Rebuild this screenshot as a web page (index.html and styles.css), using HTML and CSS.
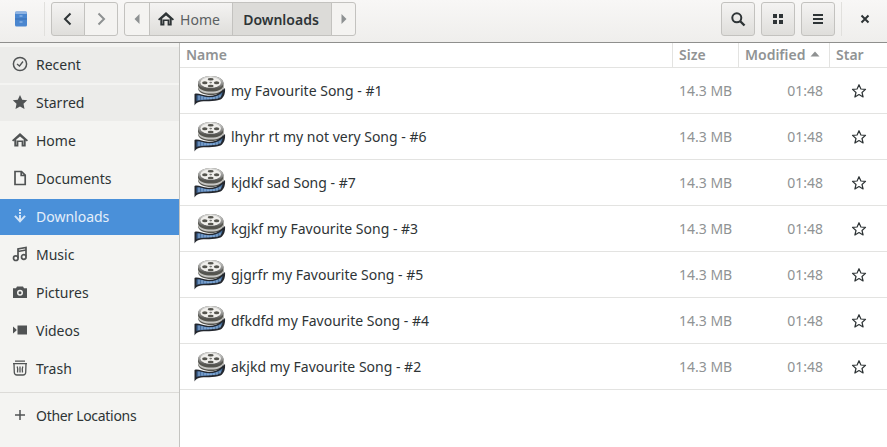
FILE: index.html
```html
<!DOCTYPE html>
<html lang="en">
<head>
<meta charset="utf-8">
<title>Downloads</title>
<link rel="stylesheet" href="styles.css">
</head>
<body>
<svg class="defs" width="0" height="0" aria-hidden="true">
  <defs>
    <linearGradient id="reelG" x1="0" y1="0" x2="0" y2="1">
      <stop offset="0" stop-color="#e2e2e0"/><stop offset="0.5" stop-color="#9a9a98"/><stop offset="1" stop-color="#4a4a48"/>
    </linearGradient>
    <linearGradient id="stripG" x1="0" y1="0" x2="1" y2="0">
      <stop offset="0" stop-color="#3a5f8e"/><stop offset="0.5" stop-color="#6b9ad0"/><stop offset="1" stop-color="#3f6690"/>
    </linearGradient>
    <symbol id="reel" viewBox="0 0 32 32">
      <path d="M4 8.500 C4 4 10 1 17 1 C24 1 29.500 4 29.500 8.500 L29.500 13 C29.500 17.500 24 20 17 20 C10 20 4 17.500 4 13 Z" fill="#55554f"/>
      <path d="M4 10.500 C5 14.500 10 16.500 17 16.500 C24 16.500 28.500 14.500 29.500 10.500 L29.500 12.500 C28.500 16.500 24 18.500 17 18.500 C10 18.500 5 16.500 4 12.500 Z" fill="#c6c6c3"/>
      <ellipse cx="16.700" cy="7.800" rx="12.700" ry="6.800" fill="url(#reelG)"/>
      <ellipse cx="16.700" cy="7.500" rx="10.300" ry="5.300" fill="#f0efec"/>
      <ellipse cx="10.800" cy="7.800" rx="2.700" ry="1.500" fill="#55554f"/>
      <ellipse cx="22.600" cy="7.800" rx="2.700" ry="1.500" fill="#55554f"/>
      <ellipse cx="16.700" cy="4.300" rx="3" ry="1.300" fill="#55554f"/>
      <ellipse cx="16.700" cy="11" rx="3" ry="1.200" fill="#55554f"/>
      <ellipse cx="16.700" cy="7.600" rx="1.400" ry="0.800" fill="#777774"/>
      <path d="M0.500 19 C4 17.500 8 20.500 14 20.800 C20 21 24 19.500 27 16.500 L31 13 C31.500 18 30 22.500 26.500 24.500 C20 27 10 25.500 5 27 C3 27.500 1.500 28.500 0.500 30.500 Z" fill="#23272e"/>
      <path d="M2.500 20.500 C6 19.800 9 22 14 22.300 C20 22.500 24.500 21 28.500 17 C28.500 20 27 22.300 24.500 23.300 C19 25 9 24 2.500 26 Z" fill="url(#stripG)"/>
      <path d="M5 20.500 V25.200 M8 21.200 V24.600 M11 22 V24.300 M14 22.300 V24.300 M17 22.500 V24.300 M20 22 V24.200 M23 21 V23.800 M26 19.800 V22.600" stroke="#a9c9ec" stroke-width="0.800"/>
    </symbol>
    <symbol id="star" viewBox="0 0 16 16">
      <path d="M8 1.700 L9.900 6 L14.500 6.400 L11 9.500 L12.100 14 L8 11.600 L3.900 14 L5 9.500 L1.500 6.400 L6.100 6 Z" fill="none" stroke="#2e3436" stroke-width="1.200" stroke-linejoin="round"/>
    </symbol>
    <symbol id="home" viewBox="0 0 16 16">
      <path d="M8 1 L16 8.300 L14.800 9.500 L13.700 8.500 L13.700 14.500 L9.600 14.500 L9.600 10 L6.400 10 L6.400 14.500 L2.300 14.500 L2.300 8.500 L1.200 9.500 L0 8.300 Z M8 4.400 L4.300 7.600 L4.300 12.800 L4.700 12.800 L4.700 8.400 L11.300 8.400 L11.300 12.800 L11.700 12.800 L11.700 7.600 Z" fill-rule="evenodd"/>
    </symbol>
  </defs>
</svg>

<div class="window">
  <header class="toolbar">
    <div class="tb-left">
      <svg class="app-icon" width="14" height="16" viewBox="0 0 14 16" aria-hidden="true">
        <rect x="1" y="0.500" width="12" height="15" rx="1.500" fill="#4a86cf"/>
        <rect x="1" y="0.500" width="12" height="2.500" rx="1" fill="#8fb4e3"/>
        <path d="M1 8 H13" stroke="#3a6fb0" stroke-width="1"/>
        <path d="M5.500 5 H8.500 M5.500 11 H8.500" stroke="#a8c7ec" stroke-width="1"/>
      </svg>
      <span class="vsep"></span>
      <div class="linked nav">
        <button class="btn nav-btn" aria-label="Back">
          <svg width="16" height="16" viewBox="0 0 16 16"><path d="M10.500 2.500 L5 8 L10.500 13.500" fill="none" stroke="#2e3436" stroke-width="2"/></svg>
        </button>
        <button class="btn nav-btn flat" aria-label="Forward">
          <svg width="16" height="16" viewBox="0 0 16 16"><path d="M5.500 2.500 L11 8 L5.500 13.500" fill="none" stroke="#8e9192" stroke-width="2"/></svg>
        </button>
      </div>
      <div class="linked path">
        <button class="btn arrow flat" aria-label="Scroll left"><svg width="6" height="10" viewBox="0 0 6 10"><path d="M5.500 0 V10 L0.500 5 Z" fill="#8e9192"/></svg></button>
        <button class="btn crumb">
          <svg class="crumb-home" width="16" height="16" aria-hidden="true"><use href="#home"/></svg>
          <span>Home</span>
        </button>
        <button class="btn crumb current"><span>Downloads</span></button>
        <button class="btn arrow flat last" aria-label="Scroll right"><svg width="6" height="10" viewBox="0 0 6 10"><path d="M0.500 0 V10 L5.500 5 Z" fill="#8e9192"/></svg></button>
      </div>
    </div>
    <div class="tb-right">
      <button class="btn tool" aria-label="Search">
        <svg width="16" height="16" viewBox="0 0 16 16"><circle cx="6.800" cy="6.800" r="4.500" fill="none" stroke="#2e3436" stroke-width="2"/><path d="M10 10 L14.500 14.500" stroke="#2e3436" stroke-width="2.400"/></svg>
      </button>
      <button class="btn tool" aria-label="Grid view">
        <svg width="16" height="16" viewBox="0 0 16 16" fill="#2e3436"><rect x="3" y="3" width="4" height="4"/><rect x="9" y="3" width="4" height="4"/><rect x="3" y="9" width="4" height="4"/><rect x="9" y="9" width="4" height="4"/></svg>
      </button>
      <button class="btn tool" aria-label="Menu">
        <svg width="16" height="16" viewBox="0 0 16 16" fill="#2e3436"><rect x="3" y="3" width="10" height="2"/><rect x="3" y="7" width="10" height="2"/><rect x="3" y="11" width="10" height="2"/></svg>
      </button>
      <span class="vsep right"></span>
      <button class="close" aria-label="Close">
        <svg width="16" height="16" viewBox="0 0 16 16"><path d="M4.500 4.500 L11.500 11.500 M11.500 4.500 L4.500 11.500" stroke="#2e3436" stroke-width="2"/></svg>
      </button>
    </div>
  </header>

  <div class="content">
    <nav class="sidebar">
      <div class="places">
        <a class="place tinted">
          <svg width="16" height="16" viewBox="0 0 16 16"><circle cx="8" cy="8" r="6.600" fill="none" stroke-width="1.500" class="sline"/><path d="M5 8 L7.500 10 L11 5.500" fill="none" stroke-width="1.300" class="sline"/></svg>
          <span>Recent</span>
        </a>
        <a class="place tinted">
          <svg width="16" height="16" viewBox="0 0 16 16"><path class="sfill" d="M8 1 L10.200 5.800 L15.200 6.300 L11.500 9.800 L12.500 15 L8 12.400 L3.500 15 L4.500 9.800 L0.800 6.300 L5.800 5.800 Z"/></svg>
          <span>Starred</span>
        </a>
        <a class="place">
          <svg class="sfill" width="16" height="16"><use href="#home"/></svg>
          <span>Home</span>
        </a>
        <a class="place">
          <svg width="16" height="16" viewBox="0 0 16 16"><path class="sline" d="M3 1.500 H9.500 L13.200 5.200 V14.500 H3 Z M9.200 1.500 V5.500 H13.200" fill="none" stroke-width="1.700"/></svg>
          <span>Documents</span>
        </a>
        <a class="place active">
          <svg width="16" height="16" viewBox="0 0 16 16" fill="#d3e4f7"><rect x="7" y="1" width="2" height="2"/><rect x="7" y="4" width="2" height="2"/><rect x="7" y="7" width="2" height="5"/><path d="M2.200 8.500 L8 14.800 L13.800 8.500 L12.300 7.300 L8 12 L3.700 7.300 Z"/></svg>
          <span>Downloads</span>
        </a>
        <a class="place">
          <svg width="16" height="16" viewBox="0 0 16 16"><path class="sline" d="M6 12 V3 L14 1.500 V10.500 M6 5.500 L14 4" fill="none" stroke-width="1.700"/><circle class="sline" cx="3.800" cy="12.200" r="2.300" fill="none" stroke-width="1.700"/><circle class="sline" cx="11.800" cy="11" r="2.300" fill="none" stroke-width="1.700"/></svg>
          <span>Music</span>
        </a>
        <a class="place">
          <svg width="16" height="16" viewBox="0 0 16 16"><path class="sfill" fill-rule="evenodd" d="M5 2.500 H11 L12 4.200 H15 V14 H1 V4.200 H4 Z M8 5.800 A3 3 0 1 0 8 11.800 A3 3 0 1 0 8 5.800 Z M8 7.300 A1.500 1.500 0 1 1 8 10.300 A1.500 1.500 0 1 1 8 7.300 Z"/></svg>
          <span>Pictures</span>
        </a>
        <a class="place">
          <svg width="16" height="16" viewBox="0 0 16 16"><path class="sfill" d="M5.500 3.500 H15 V12.500 H5.500 Z M1 4.500 L4.500 7.500 V8.500 L1 11.500 Z"/></svg>
          <span>Videos</span>
        </a>
        <a class="place">
          <svg width="16" height="16" viewBox="0 0 16 16"><path class="sline" d="M1 3.700 H15 M3 1.200 H13 M2 3.700 L2.300 12.500 C2.400 14 3.400 15 5 15 H11 C12.600 15 13.600 14 13.700 12.500 L14 3.700 M5.200 6.500 C6 8.500 6 10 5.500 12.500 M8 6.500 V12.500 M10.800 6.500 C10 8.500 10 10 10.500 12.500" fill="none" stroke-width="1.300"/></svg>
          <span>Trash</span>
        </a>
      </div>
      <hr class="side-sep">
      <a class="place other">
        <svg width="16" height="16" viewBox="0 0 16 16"><path class="sline" d="M8 3 V13 M3 8 H13" fill="none" stroke-width="1.500"/></svg>
        <span>Other Locations</span>
      </a>
    </nav>

    <main class="files">
      <div class="thead">
        <div class="th first">Name</div>
        <div class="th">Size</div>
        <div class="th sorted">Modified <svg width="10" height="6" viewBox="0 0 10 6" aria-hidden="true"><path d="M0.500 5.500 L5 0.500 L9.500 5.500 Z" fill="#8f9192"/></svg></div>
        <div class="th">Star</div>
      </div>
      <div class="row"><div class="name"><svg class="reel"><use href="#reel"/></svg><span>my Favourite Song - #1</span></div><div class="size">14.3 MB</div><div class="time">01:48</div><div class="fav"><svg width="16" height="16"><use href="#star"/></svg></div></div>
      <div class="row"><div class="name"><svg class="reel"><use href="#reel"/></svg><span>lhyhr rt my not very Song - #6</span></div><div class="size">14.3 MB</div><div class="time">01:48</div><div class="fav"><svg width="16" height="16"><use href="#star"/></svg></div></div>
      <div class="row"><div class="name"><svg class="reel"><use href="#reel"/></svg><span>kjdkf sad Song - #7</span></div><div class="size">14.3 MB</div><div class="time">01:48</div><div class="fav"><svg width="16" height="16"><use href="#star"/></svg></div></div>
      <div class="row"><div class="name"><svg class="reel"><use href="#reel"/></svg><span>kgjkf my Favourite Song - #3</span></div><div class="size">14.3 MB</div><div class="time">01:48</div><div class="fav"><svg width="16" height="16"><use href="#star"/></svg></div></div>
      <div class="row"><div class="name"><svg class="reel"><use href="#reel"/></svg><span>gjgrfr my Favourite Song - #5</span></div><div class="size">14.3 MB</div><div class="time">01:48</div><div class="fav"><svg width="16" height="16"><use href="#star"/></svg></div></div>
      <div class="row"><div class="name"><svg class="reel"><use href="#reel"/></svg><span>dfkdfd my Favourite Song - #4</span></div><div class="size">14.3 MB</div><div class="time">01:48</div><div class="fav"><svg width="16" height="16"><use href="#star"/></svg></div></div>
      <div class="row"><div class="name"><svg class="reel"><use href="#reel"/></svg><span>akjkd my Favourite Song - #2</span></div><div class="size">14.3 MB</div><div class="time">01:48</div><div class="fav"><svg width="16" height="16"><use href="#star"/></svg></div></div>
    </main>
  </div>
</div>
</body>
</html>
```

FILE: styles.css
```css
* { box-sizing: border-box; }
html, body { margin: 0; height: 100%; overflow: hidden; }
body { font: 14px "Noto Sans", "Open Sans", sans-serif; color: #2e3436; background: #fff; }
.defs { display: block; width: 0; height: 0; }
.window { width: 887px; height: 447px; display: flex; flex-direction: column; }

/* toolbar */
.toolbar {
  height: 43px; flex: none; display: flex; justify-content: space-between;
  padding-top: 2px; padding-left: 14px;
  background: linear-gradient(#f8f7f6, #efeeec);
  border-bottom: 1px solid #8f8f8d;
}
.tb-left, .tb-right { display: flex; align-items: flex-start; }
.app-icon { margin-top: 9px; }
.vsep { width: 1px; height: 34px; background: #e1e0dd; margin: 0 6px 0 16px; }
.vsep.right { margin: 0 0 0 6px; }
.linked { display: flex; height: 34px; }
.btn {
  display: flex; align-items: center; justify-content: center; height: 34px; padding: 0; margin: 0;
  font: inherit; color: #2e3436;
  border: 1px solid #c3c2bf; border-radius: 3px;
  background: linear-gradient(#f4f3f2, #dfdedb);
}
.linked .btn { border-radius: 0; margin-left: -1px; }
.linked .btn:first-child { border-radius: 3px 0 0 3px; margin-left: 0; }
.linked .btn:last-child { border-radius: 0 3px 3px 0; }
.btn.flat { background: #f4f3f1; }
.nav-btn { width: 34px; }
.linked.nav { margin-right: 6px; width: 67px; }
.path { width: 232px; }
.arrow { width: 26px; flex: none; }
.arrow.last { width: 25px; }
.crumb { flex: none; color: #5b6062; }
.crumb:nth-child(2) { width: 84px; padding-right: 4px; gap: 6px; }
.crumb.current { width: 100px; padding-right: 2px; background: #dcdbd8; color: #2e3436; font-weight: 600; }
.crumb-home { fill: #2e3436; }
.tb-right .tool { width: 34px; margin-right: 6px; }
.tb-right .tool:nth-of-type(3) { margin-right: 0; }
.close { width: 45px; height: 34px; border: 0; background: none; padding: 0; display: flex; align-items: center; justify-content: center; }

/* layout */
.content { flex: 1; display: flex; min-height: 0; }
.sidebar {
  width: 180px; flex: none; background: #f4f4f2; border-right: 1px solid #c4c4c1;
  padding-top: 4px;
}
.places { display: flex; flex-direction: column; gap: 2px; }
.place {
  height: 36px; display: flex; align-items: center; gap: 8px; padding: 0 0 2px 12px;
  color: #2e3436;
}
.place svg { flex: none; }
.place.tinted { background: #ececea; }
.place.active { background: #4a90d9; color: #e4eefa; }
.place.other { letter-spacing: -0.3px; }
.sfill { fill: #505354; }
.sline { stroke: #505354; }
.side-sep { margin: 5px 0 5px; border: 0; height: 1px; background: #dcdbd8; }

/* list */
.files { flex: 1; min-width: 0; display: flex; flex-direction: column; }
.thead, .row { display: grid; grid-template-columns: 492px 66px 91px 58px; }
.thead { height: 25px; border-bottom: 1px solid #e3e3e1; color: #909394; font-weight: 600; }
.th { display: flex; align-items: center; gap: 5px; padding: 0 0 2px 6px; border-left: 1px solid #e3e3e1; height: 24px; }
.th.first { border-left: 0; }
.row { height: 46px; border-bottom: 1px solid #e3e3e1; align-items: center; }
.name { display: flex; align-items: center; gap: 5px; padding-left: 14px; }
.reel { width: 32px; height: 32px; flex: none; }
.size { color: #8f9394; padding-left: 7px; }
.time { color: #8f9394; text-align: right; padding-right: 6px; }
.fav { display: flex; justify-content: center; padding-left: 2px; }
```
